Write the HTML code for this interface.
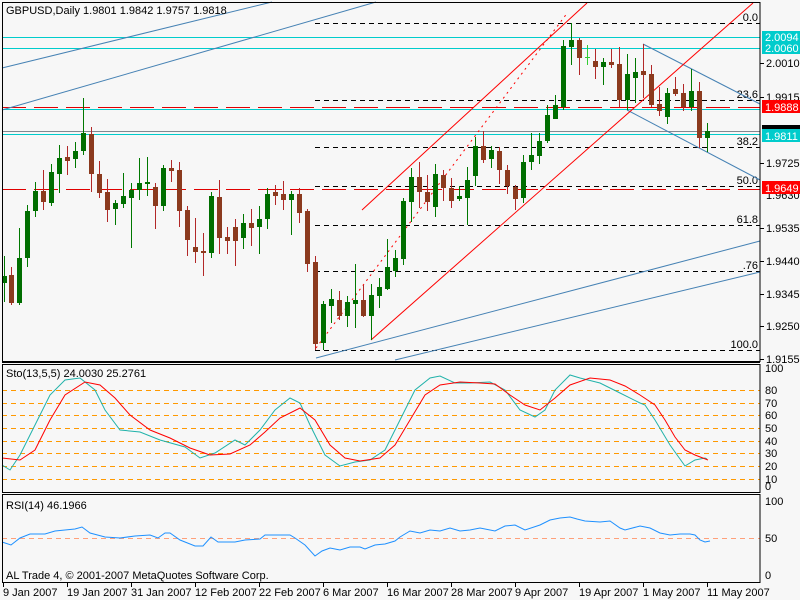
<!DOCTYPE html>
<html><head><meta charset="utf-8"><style>
html,body{margin:0;padding:0;background:#f7f7f7;}
svg{display:block;font-family:"Liberation Sans",sans-serif;}
.g{fill:#006e00}.r{fill:#8b3a1e}
.gw{stroke:#007800}.rw{stroke:#b22828}
.t{font-size:11px;fill:#000}
</style></head><body>
<svg width="800" height="600" viewBox="0 0 800 600" shape-rendering="crispEdges">
<rect width="800" height="600" fill="#f7f7f7"/>
<!-- horizontals -->
<g stroke="#00cccc" stroke-width="1">
<line x1="2" y1="37.5" x2="760" y2="37.5"/><line x1="2" y1="48.5" x2="760" y2="48.5"/>
<line x1="2" y1="109.5" x2="760" y2="109.5"/><line x1="2" y1="134.5" x2="760" y2="134.5"/>
</g>
<line x1="2" y1="131.5" x2="760" y2="131.5" stroke="#808890"/>
<g stroke="#e00000" stroke-dasharray="24 8">
<line x1="2" y1="107.5" x2="760" y2="107.5"/><line x1="2" y1="189.5" x2="760" y2="189.5"/>
</g>
<g stroke="#000" stroke-dasharray="5 4">
<line x1="315" y1="23.5" x2="760" y2="23.5"/><line x1="315" y1="100.5" x2="760" y2="100.5"/>
<line x1="315" y1="147.5" x2="760" y2="147.5"/><line x1="315" y1="186.5" x2="760" y2="186.5"/>
<line x1="315" y1="225.5" x2="760" y2="225.5"/><line x1="315" y1="271.5" x2="760" y2="271.5"/>
<line x1="315" y1="350.5" x2="760" y2="350.5"/>
</g>
<g class="t" text-anchor="end" font-size="11">
<text x="758" y="21">0.0</text><text x="758" y="98">23.6</text><text x="758" y="145">38.2</text>
<text x="758" y="184">50.0</text><text x="758" y="223">61.8</text><text x="758" y="269">.76</text><text x="758" y="348">100.0</text>
</g>
<!-- trend lines -->
<g stroke="#4682b4" fill="none" shape-rendering="auto">
<line x1="2" y1="68" x2="272" y2="2"/><line x1="2" y1="110" x2="376" y2="2"/>
<line x1="316" y1="358" x2="760" y2="241"/><line x1="395" y1="360" x2="760" y2="272"/>
<line x1="643" y1="44" x2="760" y2="104"/><line x1="627" y1="110" x2="760" y2="180"/>
</g>
<g stroke="#ff0000" fill="none" shape-rendering="auto">
<line x1="362" y1="210" x2="587" y2="3"/><line x1="371" y1="340" x2="753" y2="3"/>
<line x1="316" y1="348" x2="568" y2="12" stroke-dasharray="2 4"/>
</g>
<!-- candles -->
<g stroke-width="1">
<line class="gw" x1="4.5" y1="256" x2="4.5" y2="302"/><rect class="g" x="2" y="276" width="5" height="7"/>
<line class="rw" x1="11.5" y1="267" x2="11.5" y2="305"/><rect class="r" x="9" y="275" width="5" height="28"/>
<line class="gw" x1="19.5" y1="228" x2="19.5" y2="305"/><rect class="g" x="17" y="258" width="5" height="45"/>
<line class="gw" x1="27.5" y1="205" x2="27.5" y2="267"/><rect class="g" x="25" y="211" width="5" height="47"/>
<line class="gw" x1="35.5" y1="182" x2="35.5" y2="217"/><rect class="g" x="33" y="191" width="5" height="20"/>
<line class="rw" x1="43.5" y1="170" x2="43.5" y2="210"/><rect class="r" x="41" y="191" width="5" height="11"/>
<line class="gw" x1="51.5" y1="164" x2="51.5" y2="206"/><rect class="g" x="49" y="172" width="5" height="31"/>
<line class="gw" x1="59.5" y1="145" x2="59.5" y2="193"/><rect class="g" x="57" y="158" width="5" height="16"/>
<line class="rw" x1="67.5" y1="146" x2="67.5" y2="175"/><rect class="r" x="65" y="157" width="5" height="4"/>
<line class="gw" x1="75.5" y1="142" x2="75.5" y2="168"/><rect class="g" x="73" y="151" width="5" height="8"/>
<line class="gw" x1="83.5" y1="98" x2="83.5" y2="155"/><rect class="g" x="81" y="133" width="5" height="18"/>
<line class="rw" x1="91.5" y1="127" x2="91.5" y2="192"/><rect class="r" x="89" y="134" width="5" height="40"/>
<line class="rw" x1="99.5" y1="161" x2="99.5" y2="198"/><rect class="r" x="97" y="174" width="5" height="19"/>
<line class="rw" x1="107.5" y1="179" x2="107.5" y2="222"/><rect class="r" x="105" y="192" width="5" height="18"/>
<line class="gw" x1="115.5" y1="200" x2="115.5" y2="225"/><rect class="g" x="113" y="203" width="5" height="6"/>
<line class="gw" x1="123.5" y1="173" x2="123.5" y2="208"/><rect class="g" x="121" y="196" width="5" height="8"/>
<line class="gw" x1="131.5" y1="183" x2="131.5" y2="248"/><rect class="g" x="129" y="190" width="5" height="8"/>
<line class="gw" x1="139.5" y1="158" x2="139.5" y2="200"/><rect class="g" x="137" y="183" width="5" height="7"/>
<line class="gw" x1="147.5" y1="157" x2="147.5" y2="196"/><rect class="g" x="145" y="182" width="5" height="2"/>
<line class="rw" x1="155.5" y1="183" x2="155.5" y2="229"/><rect class="r" x="153" y="187" width="5" height="19"/>
<line class="gw" x1="163.5" y1="165" x2="163.5" y2="211"/><rect class="g" x="161" y="168" width="5" height="38"/>
<line class="rw" x1="171.5" y1="160" x2="171.5" y2="182"/><rect class="r" x="169" y="168" width="5" height="3"/>
<line class="rw" x1="179.5" y1="162" x2="179.5" y2="227"/><rect class="r" x="177" y="170" width="5" height="41"/>
<line class="rw" x1="187.5" y1="206" x2="187.5" y2="256"/><rect class="r" x="185" y="210" width="5" height="30"/>
<line class="rw" x1="195.5" y1="218" x2="195.5" y2="263"/><rect class="r" x="193" y="247" width="5" height="5"/>
<line class="rw" x1="203.5" y1="233" x2="203.5" y2="276"/><rect class="r" x="201" y="251" width="5" height="2"/>
<line class="gw" x1="211.5" y1="192" x2="211.5" y2="258"/><rect class="g" x="209" y="196" width="5" height="57"/>
<line class="rw" x1="219.5" y1="180" x2="219.5" y2="254"/><rect class="r" x="217" y="197" width="5" height="41"/>
<line class="rw" x1="227.5" y1="227" x2="227.5" y2="254"/><rect class="r" x="225" y="237" width="5" height="4"/>
<line class="rw" x1="235.5" y1="219" x2="235.5" y2="266"/><rect class="r" x="233" y="227" width="5" height="14"/>
<line class="gw" x1="243.5" y1="214" x2="243.5" y2="249"/><rect class="g" x="241" y="223" width="5" height="15"/>
<line class="rw" x1="251.5" y1="209" x2="251.5" y2="246"/><rect class="r" x="249" y="223" width="5" height="5"/>
<line class="gw" x1="259.5" y1="206" x2="259.5" y2="254"/><rect class="g" x="257" y="219" width="5" height="8"/>
<line class="gw" x1="267.5" y1="188" x2="267.5" y2="229"/><rect class="g" x="265" y="194" width="5" height="25"/>
<line class="rw" x1="275.5" y1="185" x2="275.5" y2="205"/><rect class="r" x="273" y="192" width="5" height="4"/>
<line class="rw" x1="283.5" y1="181" x2="283.5" y2="210"/><rect class="r" x="281" y="194" width="5" height="6"/>
<line class="gw" x1="291.5" y1="191" x2="291.5" y2="235"/><rect class="g" x="289" y="194" width="5" height="6"/>
<line class="rw" x1="299.5" y1="188" x2="299.5" y2="223"/><rect class="r" x="297" y="194" width="5" height="19"/>
<line class="rw" x1="307.5" y1="209" x2="307.5" y2="272"/><rect class="r" x="305" y="211" width="5" height="53"/>
<line class="rw" x1="315.5" y1="256" x2="315.5" y2="350"/><rect class="r" x="313" y="262" width="5" height="82"/>
<line class="gw" x1="323.5" y1="301" x2="323.5" y2="350"/><rect class="g" x="321" y="304" width="5" height="39"/>
<line class="gw" x1="331.5" y1="289" x2="331.5" y2="323"/><rect class="g" x="329" y="299" width="5" height="7"/>
<line class="rw" x1="339.5" y1="291" x2="339.5" y2="320"/><rect class="r" x="337" y="300" width="5" height="16"/>
<line class="gw" x1="347.5" y1="296" x2="347.5" y2="327"/><rect class="g" x="345" y="302" width="5" height="14"/>
<line class="gw" x1="355.5" y1="264" x2="355.5" y2="328"/><rect class="g" x="353" y="300" width="5" height="4"/>
<line class="rw" x1="363.5" y1="285" x2="363.5" y2="317"/><rect class="r" x="361" y="300" width="5" height="16"/>
<line class="gw" x1="371.5" y1="284" x2="371.5" y2="340"/><rect class="g" x="369" y="295" width="5" height="21"/>
<line class="gw" x1="379.5" y1="278" x2="379.5" y2="308"/><rect class="g" x="377" y="287" width="5" height="9"/>
<line class="gw" x1="387.5" y1="239" x2="387.5" y2="290"/><rect class="g" x="385" y="267" width="5" height="22"/>
<line class="gw" x1="395.5" y1="250" x2="395.5" y2="277"/><rect class="g" x="393" y="258" width="5" height="13"/>
<line class="gw" x1="403.5" y1="198" x2="403.5" y2="265"/><rect class="g" x="401" y="201" width="5" height="58"/>
<line class="gw" x1="411.5" y1="168" x2="411.5" y2="222"/><rect class="g" x="409" y="177" width="5" height="25"/>
<line class="rw" x1="419.5" y1="162" x2="419.5" y2="208"/><rect class="r" x="417" y="177" width="5" height="15"/>
<line class="rw" x1="427.5" y1="175" x2="427.5" y2="211"/><rect class="r" x="425" y="192" width="5" height="10"/>
<line class="gw" x1="435.5" y1="164" x2="435.5" y2="217"/><rect class="g" x="433" y="174" width="5" height="33"/>
<line class="rw" x1="443.5" y1="170" x2="443.5" y2="201"/><rect class="r" x="441" y="175" width="5" height="13"/>
<line class="rw" x1="451.5" y1="178" x2="451.5" y2="208"/><rect class="r" x="449" y="188" width="5" height="13"/>
<line class="gw" x1="459.5" y1="186" x2="459.5" y2="201"/><rect class="g" x="457" y="196" width="5" height="3"/>
<line class="gw" x1="467.5" y1="167" x2="467.5" y2="225"/><rect class="g" x="465" y="180" width="5" height="18"/>
<line class="gw" x1="475.5" y1="137" x2="475.5" y2="186"/><rect class="g" x="473" y="146" width="5" height="30"/>
<line class="rw" x1="483.5" y1="131" x2="483.5" y2="163"/><rect class="r" x="481" y="146" width="5" height="14"/>
<line class="gw" x1="491.5" y1="146" x2="491.5" y2="168"/><rect class="g" x="489" y="150" width="5" height="9"/>
<line class="rw" x1="499.5" y1="147" x2="499.5" y2="184"/><rect class="r" x="497" y="151" width="5" height="19"/>
<line class="rw" x1="507.5" y1="165" x2="507.5" y2="194"/><rect class="r" x="505" y="170" width="5" height="16"/>
<line class="rw" x1="515.5" y1="185" x2="515.5" y2="210"/><rect class="r" x="513" y="187" width="5" height="12"/>
<line class="gw" x1="523.5" y1="155" x2="523.5" y2="203"/><rect class="g" x="521" y="162" width="5" height="36"/>
<line class="gw" x1="531.5" y1="133" x2="531.5" y2="170"/><rect class="g" x="529" y="155" width="5" height="7"/>
<line class="gw" x1="539.5" y1="133" x2="539.5" y2="164"/><rect class="g" x="537" y="141" width="5" height="15"/>
<line class="gw" x1="547.5" y1="105" x2="547.5" y2="143"/><rect class="g" x="545" y="115" width="5" height="26"/>
<line class="gw" x1="555.5" y1="95" x2="555.5" y2="119"/><rect class="g" x="553" y="105" width="5" height="14"/>
<line class="gw" x1="563.5" y1="40" x2="563.5" y2="110"/><rect class="g" x="561" y="46" width="5" height="61"/>
<line class="gw" x1="571.5" y1="23" x2="571.5" y2="65"/><rect class="g" x="569" y="40" width="5" height="7"/>
<line class="rw" x1="579.5" y1="38" x2="579.5" y2="75"/><rect class="r" x="577" y="40" width="5" height="18"/>
<line x1="587.5" y1="45" x2="587.5" y2="65" stroke="#33cc33"/><line x1="585" y1="57.5" x2="590" y2="57.5" stroke="#33cc33"/>
<line class="rw" x1="595.5" y1="49" x2="595.5" y2="79"/><rect class="r" x="593" y="61" width="5" height="6"/>
<line class="gw" x1="603.5" y1="58" x2="603.5" y2="85"/><rect class="g" x="601" y="62" width="5" height="5"/>
<line class="rw" x1="611.5" y1="49" x2="611.5" y2="68"/><rect class="r" x="609" y="62" width="5" height="3"/>
<line class="rw" x1="619.5" y1="47" x2="619.5" y2="107"/><rect class="r" x="617" y="64" width="5" height="36"/>
<line class="gw" x1="627.5" y1="54" x2="627.5" y2="110"/><rect class="g" x="625" y="74" width="5" height="26"/>
<line class="gw" x1="635.5" y1="58" x2="635.5" y2="103"/><rect class="g" x="633" y="72" width="5" height="6"/>
<line class="rw" x1="643.5" y1="44" x2="643.5" y2="98"/><rect class="r" x="641" y="71" width="5" height="4"/>
<line class="rw" x1="651.5" y1="65" x2="651.5" y2="107"/><rect class="r" x="649" y="74" width="5" height="31"/>
<line class="rw" x1="659.5" y1="87" x2="659.5" y2="116"/><rect class="r" x="657" y="104" width="5" height="7"/>
<line class="gw" x1="667.5" y1="88" x2="667.5" y2="124"/><rect class="g" x="665" y="93" width="5" height="24"/>
<line class="rw" x1="675.5" y1="77" x2="675.5" y2="96"/><rect class="r" x="673" y="89" width="5" height="5"/>
<line class="rw" x1="683.5" y1="84" x2="683.5" y2="111"/><rect class="r" x="681" y="93" width="5" height="14"/>
<line class="gw" x1="691.5" y1="69" x2="691.5" y2="111"/><rect class="g" x="689" y="91" width="5" height="16"/>
<line class="rw" x1="699.5" y1="82" x2="699.5" y2="148"/><rect class="r" x="697" y="91" width="5" height="47"/>
<line class="gw" x1="707.5" y1="123" x2="707.5" y2="152"/><rect class="g" x="705" y="131" width="5" height="7"/>
</g>
<text class="t" x="6" y="14">GBPUSD,Daily  1.9801 1.9842 1.9757 1.9818</text>
<!-- right axis main -->
<g class="t">
<text x="766" y="67">2.0010</text><text x="766" y="101">1.9915</text><text x="766" y="167">1.9725</text>
<text x="766" y="199">1.9630</text><text x="766" y="232">1.9535</text><text x="766" y="265">1.9440</text>
<text x="766" y="298">1.9345</text><text x="766" y="330">1.9250</text><text x="766" y="363">1.9155</text>
</g>
<g stroke="#000"><line x1="760" y1="63.5" x2="764" y2="63.5"/><line x1="760" y1="97.5" x2="764" y2="97.5"/><line x1="760" y1="163.5" x2="764" y2="163.5"/><line x1="760" y1="228.5" x2="764" y2="228.5"/><line x1="760" y1="261.5" x2="764" y2="261.5"/><line x1="760" y1="294.5" x2="764" y2="294.5"/><line x1="760" y1="326.5" x2="764" y2="326.5"/><line x1="760" y1="359.5" x2="764" y2="359.5"/></g>
<rect x="762" y="31" width="38" height="12" fill="#00cccc"/><text x="765" y="41" class="t" fill="#fff" style="fill:#fff">2.0094</text>
<rect x="762" y="42" width="38" height="12" fill="#00cccc"/><text x="765" y="52" class="t" style="fill:#fff">2.0060</text>
<rect x="762" y="100" width="38" height="13" fill="#ff0000"/><text x="765" y="111" class="t" style="fill:#fff">1.9888</text>
<rect x="762" y="125" width="38" height="5" fill="#000"/>
<rect x="762" y="129" width="38" height="13" fill="#00cccc"/><text x="765" y="140" class="t" style="fill:#fff">1.9811</text>
<rect x="762" y="181" width="38" height="13" fill="#ff0000"/><text x="765" y="192" class="t" style="fill:#fff">1.9649</text>
<!-- stochastic panel -->
<g stroke="#ff9900" stroke-dasharray="5 4">
<line x1="2" y1="390.5" x2="760" y2="390.5"/><line x1="2" y1="403.5" x2="760" y2="403.5"/><line x1="2" y1="415.5" x2="760" y2="415.5"/><line x1="2" y1="428.5" x2="760" y2="428.5"/><line x1="2" y1="441.5" x2="760" y2="441.5"/><line x1="2" y1="453.5" x2="760" y2="453.5"/><line x1="2" y1="466.5" x2="760" y2="466.5"/><line x1="2" y1="479.5" x2="760" y2="479.5"/>
</g>
<polyline fill="none" stroke="#20b2aa" shape-rendering="auto" points="2,465 10,470 20,455 35,425 50,395 65,380 80,378 95,390 105,410 120,430 140,432 160,440 185,447 200,458 215,453 235,440 245,445 260,430 275,410 290,398 300,403 310,425 325,455 340,466 355,462 370,460 385,450 400,420 415,390 430,378 440,376 455,383 470,383 490,382 505,390 520,410 535,417 545,410 555,390 570,375 580,378 600,383 620,393 640,403 645,405 655,420 670,445 685,466 695,460 705,458 707,459"/>
<polyline fill="none" stroke="#ff0000" shape-rendering="auto" points="2,458 20,460 35,450 50,420 65,395 85,382 100,385 115,398 130,415 150,430 170,438 190,448 210,455 230,454 250,445 265,432 280,418 300,408 315,420 330,445 345,458 360,461 380,458 395,445 410,420 425,395 440,385 460,382 480,383 495,384 510,395 525,405 540,410 555,398 570,385 590,378 610,380 625,386 640,395 655,405 665,420 675,437 685,450 695,455 708,460"/>
<text class="t" x="6" y="377">Sto(13,5,5) 24.0030 25.2761</text>
<g class="t"><text x="765" y="372">100</text><text x="765" y="394">80</text><text x="765" y="407">70</text><text x="765" y="419">60</text><text x="765" y="432">50</text><text x="765" y="445">40</text><text x="765" y="457">30</text><text x="765" y="470">20</text><text x="765" y="483">10</text><text x="765" y="490">0</text></g>
<!-- RSI -->
<line x1="2" y1="538.5" x2="760" y2="538.5" stroke="#ffa07a" stroke-dasharray="5 4"/>
<polyline fill="none" stroke="#1e90ff" shape-rendering="auto" points="2,542 11,545 20,538 30,534 45,534 55,531 75,529 82,527 90,533 105,537 120,538 135,536 150,535 158,538 165,533 170,533 180,540 195,546 203,546 211,537 218,542 235,542 245,540 260,539 265,535 290,535 295,538 305,545 315,556 322,551 330,548 340,550 350,547 360,547 365,549 375,545 385,544 395,541 400,537 410,531 420,533 430,530 440,531 450,528 460,531 470,530 480,528 495,531 505,526 515,525 525,530 540,525 550,520 560,518 570,517 577,519 585,521 600,522 610,521 620,528 625,530 640,526 650,528 660,533 670,535 680,534 690,534 695,535 700,540 705,542 710,541"/>
<text class="t" x="6" y="509">RSI(14) 46.1966</text>
<text class="t" x="6" y="579">AL Trade 4, © 2001-2007 MetaQuotes Software Corp.</text>
<g class="t"><text x="765" y="505">100</text><text x="765" y="542">50</text><text x="765" y="579">0</text></g>
<!-- frames -->
<g fill="none" stroke="#000">
<rect x="2.5" y="2.5" width="757.5" height="359"/>
<line x1="2" y1="362.5" x2="760" y2="362.5"/>
<rect x="2.5" y="364.5" width="757.5" height="128"/>
<rect x="2.5" y="494.5" width="757.5" height="88"/>
</g>
<g stroke="#000"><line x1="3.5" y1="583" x2="3.5" y2="587"/><line x1="67.5" y1="583" x2="67.5" y2="587"/><line x1="131.5" y1="583" x2="131.5" y2="587"/><line x1="195.5" y1="583" x2="195.5" y2="587"/><line x1="259.5" y1="583" x2="259.5" y2="587"/><line x1="323.5" y1="583" x2="323.5" y2="587"/><line x1="387.5" y1="583" x2="387.5" y2="587"/><line x1="451.5" y1="583" x2="451.5" y2="587"/><line x1="515.5" y1="583" x2="515.5" y2="587"/><line x1="579.5" y1="583" x2="579.5" y2="587"/><line x1="643.5" y1="583" x2="643.5" y2="587"/><line x1="707.5" y1="583" x2="707.5" y2="587"/></g>
<g class="t">
<text x="3" y="596">9 Jan 2007</text><text x="67" y="596">19 Jan 2007</text><text x="131" y="596">31 Jan 2007</text><text x="195" y="596">12 Feb 2007</text><text x="259" y="596">22 Feb 2007</text><text x="323" y="596">6 Mar 2007</text><text x="387" y="596">16 Mar 2007</text><text x="451" y="596">28 Mar 2007</text><text x="515" y="596">9 Apr 2007</text><text x="579" y="596">19 Apr 2007</text><text x="643" y="596">1 May 2007</text><text x="707" y="596">11 May 2007</text>
</g>
</svg>
</body></html>
